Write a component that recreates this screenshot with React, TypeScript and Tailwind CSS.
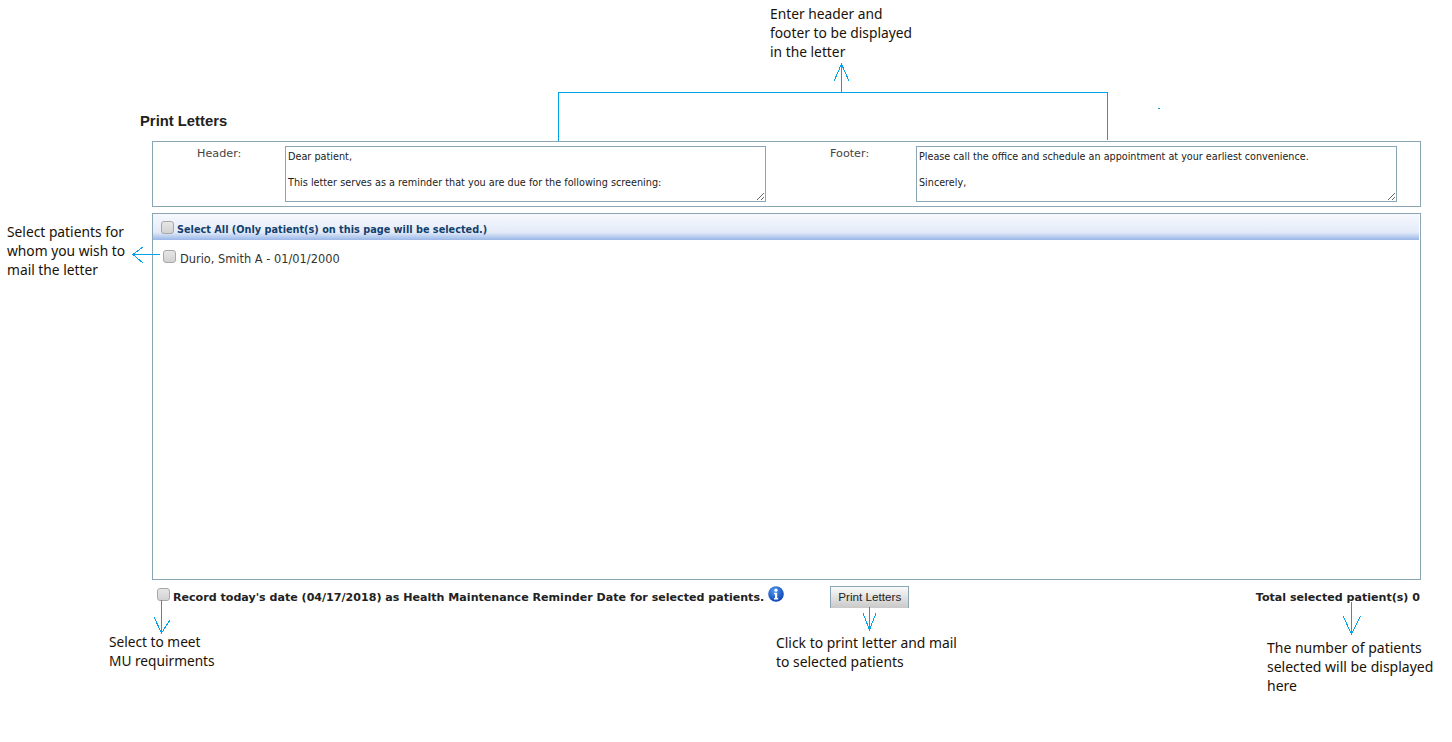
const verdana = "font-['DejaVu_Sans',sans-serif]";

function Check() {
  return (
    <input
      type="checkbox"
      className="appearance-none block shrink-0 w-[13px] h-[13px] rounded-[3px] border border-[#a8a8a8] bg-gradient-to-b from-[#e6e6e6] to-[#d2d2d2]"
    />
  );
}

function Note({ className, lines }: { className: string; lines: string[] }) {
  return (
    <div className={`absolute font-['Noto_Sans',sans-serif] leading-[19px] text-[#1a1208] whitespace-nowrap ${className}`}>
      {lines.map((l) => (
        <div key={l}>{l}</div>
      ))}
    </div>
  );
}

export default function App() {
  return (
    <div className="relative w-[1452px] h-[742px] bg-white overflow-hidden text-[#333]">
      <div className="pt-[113px]">
        <h1 className="ml-[140px] h-[28px] font-['Liberation_Sans',sans-serif] font-bold text-[14.8px] leading-[16px] text-[#222]">
          Print Letters
        </h1>

        <div className={`ml-[152px] w-[1269px] h-[66px] border border-[#8aa5b4] flex pt-[4px] text-[11.2px] ${verdana}`}>
          <label className="w-[132px] pl-[44px] pt-[1px] leading-[13px] text-[#444]">Header:</label>
          <textarea
            readOnly
            className="block w-[481px] h-[56px] border border-[#8aa5b4] px-[2px] pt-[3px] pb-[1px] text-[9.7px] leading-[13px] text-[#222] outline-none"
            defaultValue={"Dear patient,\n\nThis letter serves as a reminder that you are due for the following screening:"}
          />
          <label className="w-[150px] pl-[64px] pt-[1px] leading-[13px] text-[#444]">Footer:</label>
          <textarea
            readOnly
            className="block w-[481px] h-[56px] border border-[#8aa5b4] px-[2px] pt-[3px] pb-[1px] text-[9.63px] leading-[13px] text-[#222] outline-none"
            defaultValue={"Please call the office and schedule an appointment at your earliest convenience.\n\nSincerely,"}
          />
        </div>

        <div className={`ml-[152px] mt-[6px] w-[1269px] h-[367px] border border-[#8aa5b4] pr-[1px] text-[11px] ${verdana}`}>
          <div className="h-[26px] flex items-center gap-[3px] pl-[8px] bg-gradient-to-b from-[#f6f8fd] via-[#e4ebf8] via-70% to-[#9ab7e8]">
            <Check />
            <span className="font-['DejaVu_Sans_Condensed','DejaVu_Sans',sans-serif] text-[10.8px] font-bold text-[#12406f] leading-[13px] mt-[5px]">
              Select All (Only patient(s) on this page will be selected.)
            </span>
          </div>
          <div className="flex items-center gap-[4px] pl-[10px] pt-[7px]">
            <Check />
            <span className="text-[11.4px] leading-[13px] mt-[6px] text-[#333]">Durio, Smith A - 01/01/2000</span>
          </div>
        </div>

        <div className={`ml-[152px] mt-[6px] w-[1269px] h-[22px] relative flex text-[11.08px] ${verdana}`}>
          <div className="pl-[5px] pt-[2px]">
            <Check />
          </div>
          <span className="ml-[3px] mt-[5px] font-bold leading-[13px] text-[#222] whitespace-nowrap">
            Record today's date (04/17/2018) as Health Maintenance Reminder Date for selected patients.
          </span>
          <svg className="ml-[4px] shrink-0" width="16" height="16" viewBox="0 0 16 16">
            <defs>
              <radialGradient id="i" cx="40%" cy="30%" r="75%">
                <stop offset="0%" stopColor="#4f9bf0" />
                <stop offset="100%" stopColor="#0c3fb0" />
              </radialGradient>
            </defs>
            <circle cx="8" cy="8" r="7.8" fill="url(#i)" />
            <circle cx="8" cy="4.2" r="1.6" fill="#fff" />
            <path d="M6 6.8h3.2v5.2h1v1.4H6V12h1V8.2H6z" fill="#fff" />
          </svg>
          <button className="ml-[46px] w-[79px] h-[22px] pb-[2px] border border-b-0 border-[#8aa5b4] bg-gradient-to-b from-[#fafafa] to-[#c9c9c9] font-['Liberation_Sans',sans-serif] text-[11.7px] leading-[17px] text-[#222]">
            Print Letters
          </button>
          <span className="ml-auto mr-[1px] mt-[5px] font-bold leading-[13px] text-[#222] whitespace-nowrap">
            Total selected patient(s) 0
          </span>
        </div>
      </div>

      <Note className="text-[13.8px] left-[770px] top-[4px]" lines={["Enter header and", "footer to be displayed", "in the letter"]} />
      <Note className="text-[13.8px] left-[7px] top-[222px]" lines={["Select patients for", "whom you wish to", "mail the letter"]} />
      <Note className="text-[13.7px] left-[109px] top-[632px]" lines={["Select to meet", "MU requirments"]} />
      <Note className="text-[13.9px] left-[776px] top-[633px]" lines={["Click to print letter and mail", "to selected patients"]} />
      <Note className="text-[14px] left-[1267px] top-[638px]" lines={["The number of patients", "selected will be displayed", "here"]} />

      <svg className="absolute inset-0 pointer-events-none" width="1452" height="742" fill="none" stroke="#00a2e8" strokeWidth="1" shapeRendering="crispEdges">
        <path d="M558.5 141V92.5H1107.5V140" />
        <path d="M841.5 92V64M834 81L841.5 64L849 81" />
        <path d="M1158 108.5H1160" />
        <path d="M160 254.5H133M143 247L133 254.5L143 263" />
        <path d="M161.5 600V633M154 617L161.5 633L170 620" />
        <path d="M869.5 607V630M863 613L869.5 630L876 613" />
        <path d="M1351.5 602V634M1343 616L1351.5 634L1360.5 616" />
      </svg>
    </div>
  );
}
